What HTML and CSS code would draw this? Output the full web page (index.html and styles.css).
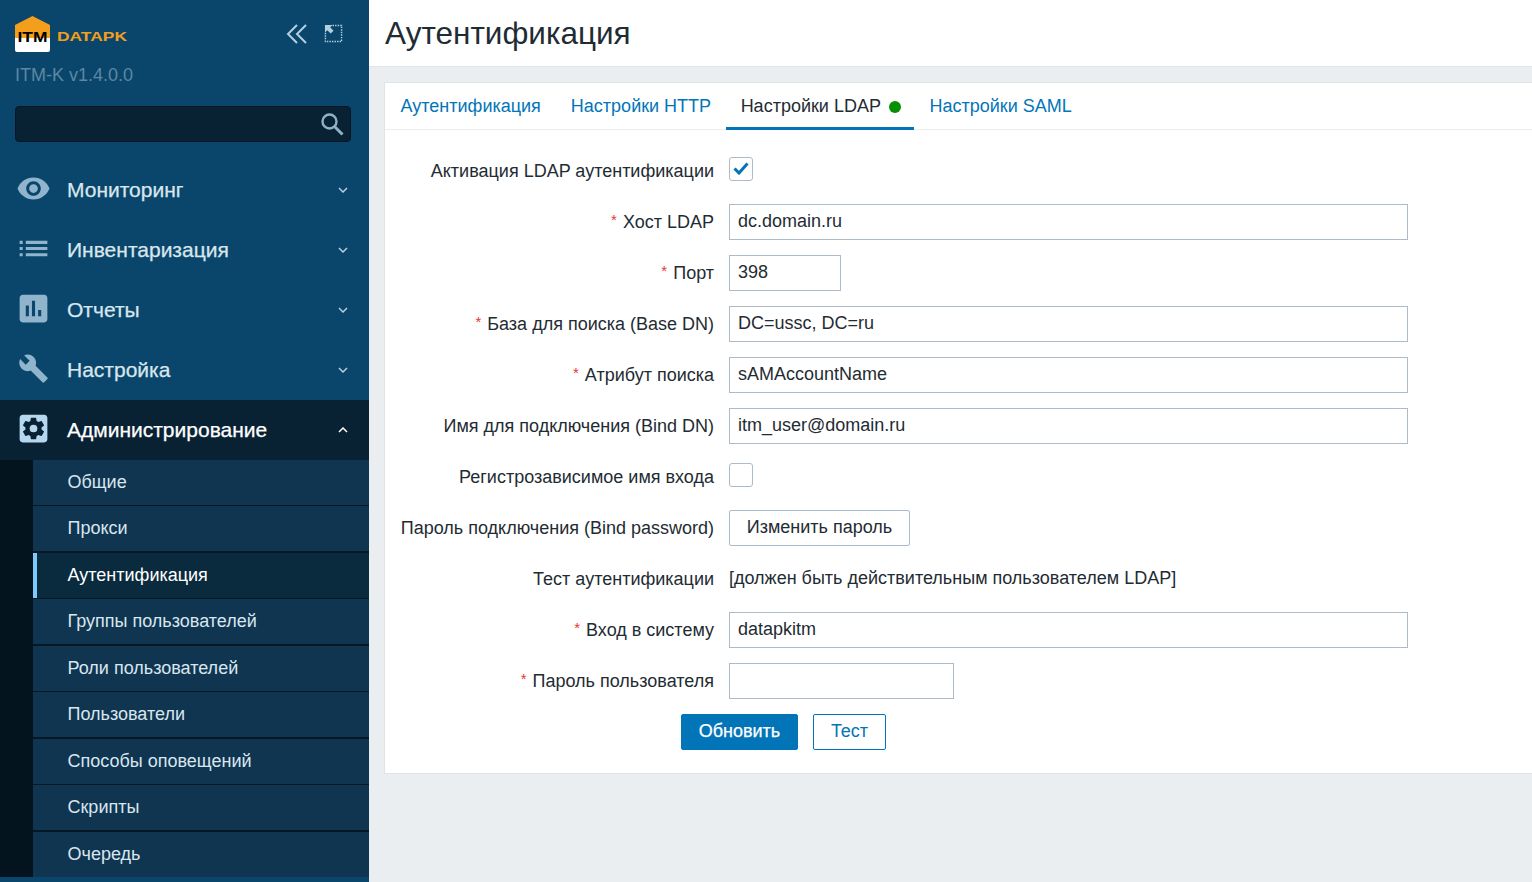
FILE: index.html
```html
<!DOCTYPE html>
<html lang="ru">
<head>
  <meta charset="utf-8">
  <title>Аутентификация</title>
  <link rel="stylesheet" href="styles.css">
</head>
<body>
  <div class="app">
    <aside class="sidebar">
      <div class="brand">
        <svg class="logo" width="115" height="38" viewBox="0 0 115 38">
          <path d="M1 10 18.500 1 36 10v13H1z" fill="#f49f1c"/>
          <path d="M1 23h35v12a2 2 0 0 1-2 2H3a2 2 0 0 1-2-2z" fill="#fff"/>
          <text x="18.500" y="26.500" class="logo-itm" text-anchor="middle" textLength="30" lengthAdjust="spacingAndGlyphs">ITM</text>
          <text x="43" y="26" class="logo-name" textLength="70" lengthAdjust="spacingAndGlyphs">DATAPK</text>
        </svg>
        <div class="brand-tools">
          <svg width="22" height="20" viewBox="0 0 22 20" fill="none" stroke="#b5cfdf" stroke-width="2"><path d="M11 1 2 10l9 9M20 1l-9 9 9 9"/></svg>
          <svg width="19" height="19" viewBox="0 0 20 20"><path d="M9 1.500h9.500V18.500H1.500V9" fill="none" stroke="#b5cfdf" stroke-width="1.500" stroke-dasharray="1.500 1.200"/><path d="M1 1h8L6.500 3.500 10 7 7 10 3.500 6.500 1 9z" fill="#b5cfdf"/></svg>
        </div>
      </div>
      <div class="version">ITM-K v1.4.0.0</div>
      <div class="search">
        <svg width="24" height="24" viewBox="0 0 24 24" fill="none" stroke="#8fb1c6" stroke-width="2.400"><circle cx="9.500" cy="9.500" r="7"/><path d="m14.500 14.500 8 8" stroke-width="3"/></svg>
      </div>
      <nav class="menu">
        <a class="menu-item">
          <span class="menu-icon"><svg width="35" height="35" viewBox="0 0 24 24"><path d="M12 4.500C7 4.500 2.730 7.610 1 12c1.730 4.390 6 7.500 11 7.500s9.270-3.110 11-7.500c-1.730-4.390-6-7.500-11-7.500zM12 17c-2.760 0-5-2.240-5-5s2.240-5 5-5 5 2.240 5 5-2.240 5-5 5zm0-8c-1.660 0-3 1.340-3 3s1.340 3 3 3 3-1.340 3-3-1.340-3-3-3z"/></svg></span>
          <span class="menu-label">Мониторинг</span>
          <svg class="chev" width="10" height="6" viewBox="0 0 10 6"><path d="m1 1 4 4 4-4"/></svg>
        </a>
        <a class="menu-item">
          <span class="menu-icon"><svg width="37" height="37" viewBox="0 0 24 24"><path d="M3 13h2v-2H3v2zm0 4h2v-2H3v2zm0-8h2V7H3v2zm4 4h14v-2H7v2zm0 4h14v-2H7v2zM7 7v2h14V7H7z"/></svg></span>
          <span class="menu-label">Инвентаризация</span>
          <svg class="chev" width="10" height="6" viewBox="0 0 10 6"><path d="m1 1 4 4 4-4"/></svg>
        </a>
        <a class="menu-item">
          <span class="menu-icon"><svg width="37" height="37" viewBox="0 0 24 24"><path d="M19 3H5c-1.100 0-2 .9-2 2v14c0 1.100.9 2 2 2h14c1.100 0 2-.9 2-2V5c0-1.100-.9-2-2-2zM9 17H7v-7h2v7zm4 0h-2V7h2v10zm4 0h-2v-4h2v4z"/></svg></span>
          <span class="menu-label">Отчеты</span>
          <svg class="chev" width="10" height="6" viewBox="0 0 10 6"><path d="m1 1 4 4 4-4"/></svg>
        </a>
        <a class="menu-item">
          <span class="menu-icon"><svg width="31" height="31" viewBox="0 0 24 24"><path d="M22.700 19l-9.100-9.100c.9-2.300.4-5-1.500-6.900-2-2-5-2.400-7.400-1.300L9 6 6 9 1.600 4.700C.4 7.100.9 10.100 2.900 12.100c1.900 1.900 4.600 2.400 6.900 1.500l9.100 9.100c.4.4 1 .4 1.400 0l2.300-2.300c.5-.4.5-1.100.1-1.400z"/></svg></span>
          <span class="menu-label">Настройка</span>
          <svg class="chev" width="10" height="6" viewBox="0 0 10 6"><path d="m1 1 4 4 4-4"/></svg>
        </a>
        <a class="menu-item open">
          <span class="menu-icon"><svg width="37" height="37" viewBox="0 0 24 24"><path fill-rule="evenodd" d="M19 3H5c-1.110 0-2 .89-2 2v14c0 1.110.89 2 2 2h14c1.110 0 2-.89 2-2V5c0-1.110-.89-2-2-2zm-1.750 9c0 .23-.02.46-.05.68l1.480 1.160c.13.11.17.3.08.45l-1.400 2.420c-.09.15-.27.21-.43.15l-1.740-.7c-.36.28-.76.51-1.180.69l-.26 1.850c-.03.17-.18.3-.35.3h-2.800c-.17 0-.32-.13-.35-.29l-.26-1.850c-.43-.18-.82-.41-1.180-.69l-1.740.7c-.16.06-.34 0-.43-.15l-1.400-2.420c-.09-.15-.05-.34.08-.45l1.480-1.160c-.03-.23-.05-.46-.05-.69 0-.23.02-.46.05-.68l-1.480-1.160c-.13-.11-.17-.3-.08-.45l1.400-2.420c.09-.15.27-.21.43-.15l1.740.7c.36-.28.76-.51 1.180-.69l.26-1.850c.03-.17.18-.3.35-.3h2.800c.17 0 .32.13.35.29l.26 1.850c.43.18.82.41 1.180.69l1.740-.7c.16-.06.34 0 .43.15l1.400 2.420c.09.15.05.34-.08.45l-1.480 1.160c.03.23.05.46.05.69z"/><circle cx="12" cy="12" r="2.500"/></svg></span>
          <span class="menu-label">Администрирование</span>
          <svg class="chev" width="10" height="6" viewBox="0 0 10 6"><path d="m1 5 4-4 4 4"/></svg>
        </a>
        <ul class="submenu">
          <li>Общие</li>
          <li>Прокси</li>
          <li class="current">Аутентификация</li>
          <li>Группы пользователей</li>
          <li>Роли пользователей</li>
          <li>Пользователи</li>
          <li>Способы оповещений</li>
          <li>Скрипты</li>
          <li>Очередь</li>
        </ul>
      </nav>
    </aside>

    <main class="content">
      <header class="page-header"><h1>Аутентификация</h1></header>
      <section class="card">
        <div class="tabs">
          <a class="tab">Аутентификация</a>
          <a class="tab">Настройки HTTP</a>
          <a class="tab active">Настройки LDAP <span class="dot"></span></a>
          <a class="tab">Настройки SAML</a>
        </div>
        <form class="form">
          <label>Активация LDAP аутентификации</label>
          <div class="field"><span class="check"><svg width="16" height="13" viewBox="0 0 16 13" fill="none" stroke="#0275b8" stroke-width="3"><path d="m1.500 6.500 4.500 4.500 8.500-9.500"/></svg></span></div>

          <label><i>*</i> Хост LDAP</label>
          <div class="field"><input class="wide" type="text" value="dc.domain.ru"></div>

          <label><i>*</i> Порт</label>
          <div class="field"><input class="port" type="text" value="398"></div>

          <label><i>*</i> База для поиска (Base DN)</label>
          <div class="field"><input class="wide" type="text" value="DC=ussc, DC=ru"></div>

          <label><i>*</i> Атрибут поиска</label>
          <div class="field"><input class="wide" type="text" value="sAMAccountName"></div>

          <label>Имя для подключения (Bind DN)</label>
          <div class="field"><input class="wide" type="text" value="itm_user@domain.ru"></div>

          <label>Регистрозависимое имя входа</label>
          <div class="field"><span class="check"></span></div>

          <label>Пароль подключения (Bind password)</label>
          <div class="field"><button type="button" class="btn btn-grey">Изменить пароль</button></div>

          <label>Тест аутентификации</label>
          <div class="field note">[должен быть действительным пользователем LDAP]</div>

          <label><i>*</i> Вход в систему</label>
          <div class="field"><input class="wide" type="text" value="datapkitm"></div>

          <label><i>*</i> Пароль пользователя</label>
          <div class="field"><input class="pass" type="password"></div>
        </form>
        <div class="actions">
          <button type="button" class="btn btn-primary">Обновить</button>
          <button type="button" class="btn btn-outline">Тест</button>
        </div>
      </section>
    </main>
  </div>
</body>
</html>
```

FILE: styles.css
```css
* {
  box-sizing: border-box;
}
html, body {
  height: 100%;
}
body {
  margin: 0;
  font-family: "Liberation Sans", Arial, sans-serif;
  font-size: 18px;
  color: #1f2c33;
  background: #ebeef0;
  overflow: hidden;
}
.app {
  display: flex;
  height: 100vh;
}

/* sidebar */
.sidebar {
  width: 369px;
  flex: none;
  background: #0a466b;
  overflow: hidden;
}
.brand {
  display: flex;
  justify-content: space-between;
  align-items: flex-start;
  padding: 15px 26.500px 0 14px;
  height: 62px;
}
.logo-itm {
  font: bold 15px "Liberation Sans", Arial, sans-serif;
  fill: #000;
}
.logo-name {
  font: bold 12.500px "Liberation Sans", Arial, sans-serif;
  fill: #f49f1c;
}
.brand-tools {
  display: flex;
  gap: 15.500px;
  padding-top: 9px;
}
.version {
  padding-left: 15px;
  color: #5d87a3;
  line-height: 26px;
}
.search {
  display: flex;
  justify-content: flex-end;
  align-items: center;
  height: 36px;
  margin: 18px 18px 0 15px;
  padding-right: 6px;
  background: #082233;
  border: 1px solid #051824;
  border-radius: 4px;
}
.menu {
  margin-top: 18px;
}
.menu-item {
  display: flex;
  align-items: center;
  height: 60px;
  padding-right: 21px;
  color: #d9e6ee;
  font-size: 21px;
  -webkit-text-stroke: .25px;
}
.menu-icon {
  display: flex;
  justify-content: center;
  width: 66px;
  margin-top: -4px;
}
.menu-icon svg {
  fill: #8fb4cc;
}
.menu-label {
  flex: 1;
  padding-left: 1px;
}
.chev {
  fill: none;
  stroke: #b5cfdf;
  stroke-width: 1.500;
}
.menu-item.open {
  background: #082233;
  color: #fff;
}
.menu-item.open .menu-icon svg {
  fill: #b5d8ee;
}
.menu-item.open .chev {
  stroke: #fff;
}
.submenu {
  display: flex;
  flex-direction: column;
  gap: 1.450px;
  list-style: none;
  margin: 0;
  padding: 0 0 0 33px;
  background: linear-gradient(90deg, #03141f 33px, #051824 33px);
}
.submenu li {
  height: 45px;
  display: flex;
  align-items: center;
  padding-left: 34.500px;
  background: #0f3551;
  color: #d9e6ee;
}
.submenu li.current {
  padding-left: 30.500px;
  background: #0a2a3e;
  border-left: 4px solid #7fc8fb;
  color: #fff;
}

/* content */
.content {
  flex: 1;
  min-width: 0;
}
.page-header {
  height: 67px;
  padding-left: 16px;
  background: #fff;
  border-bottom: 1px solid #dfe4e7;
}
h1 {
  margin: 0;
  font-size: 31.500px;
  font-weight: normal;
  line-height: 66px;
}
.card {
  height: 692px;
  margin: 15px 0 0 15px;
  background: #fff;
  border: 1px solid #dfe4e7;
  border-right: 0;
}
.tabs {
  display: flex;
  height: 47px;
  padding-left: .500px;
  border-bottom: 1px solid #ebeef0;
}
.tab {
  display: flex;
  align-items: center;
  gap: 8px;
  padding: 0 15px;
  height: 47px;
  color: #0275b8;
}
.tab.active {
  margin: 0 .500px 0 -.500px;
  padding: 3px 13px 0 15px;
  color: #1f2c33;
  border-bottom: 3px solid #0275b8;
}
.dot {
  width: 12px;
  height: 12px;
  border-radius: 50%;
  background: #059005;
}
.form {
  display: grid;
  grid-template-columns: 329px 1fr;
  column-gap: 15px;
  row-gap: 15px;
  grid-auto-rows: 36px;
  padding-top: 23px;
}
.form label {
  display: flex;
  justify-content: flex-end;
  align-items: center;
  gap: 6px;
  white-space: nowrap;
}
.form label i {
  color: #e33734;
  font-style: normal;
  font-size: 15px;
  margin-top: -5px;
}
.field {
  display: flex;
  align-items: center;
}
.field input {
  height: 36px;
  padding: 0 8px 2px;
  font: inherit;
  color: #1f2c33;
  background: #fff;
  border: 1px solid #acbbc7;
  border-radius: 0;
  outline: none;
}
.note {
  padding-bottom: 2px;
}
.wide { width: 679px; }
.port { width: 112px; }
.pass { width: 225px; }
.check {
  display: flex;
  justify-content: center;
  align-items: center;
  width: 24px;
  height: 24px;
  margin-top: -5px;
  border: 1px solid #acbbc7;
  border-radius: 3px;
  background: #fff;
}
.btn {
  height: 36px;
  padding: 0 8px 2px;
  font: inherit;
  white-space: nowrap;
  border-radius: 2px;
  cursor: pointer;
}
.btn-grey {
  width: 181px;
  color: #1f2c33;
  background: #fff;
  border: 1px solid #acbbc7;
}
.actions {
  display: flex;
  gap: 15px;
  padding: 15px 0 0 296px;
}
.btn-primary {
  width: 117px;
  color: #fff;
  background: #0275b8;
  border: 1px solid #0275b8;
  -webkit-text-stroke: .25px;
}
.btn-outline {
  width: 73px;
  color: #0275b8;
  background: #fff;
  border: 1px solid #0275b8;
}
```
